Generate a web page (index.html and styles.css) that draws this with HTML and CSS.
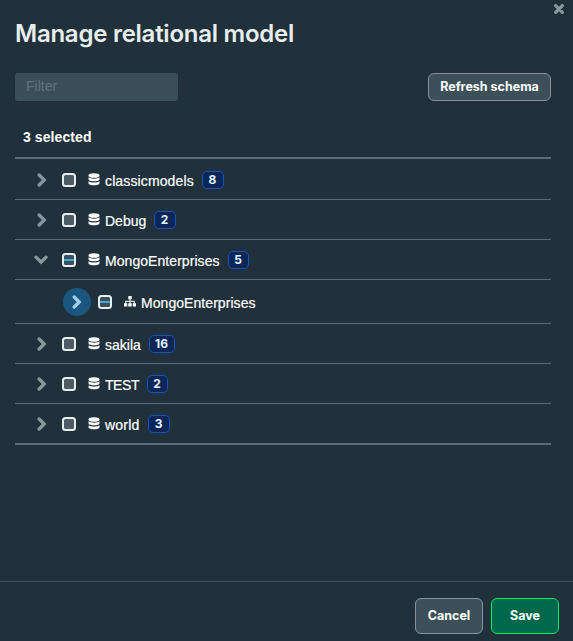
FILE: index.html
```
<!DOCTYPE html>
<html lang="en">
<head>
<meta charset="utf-8">
<title>Manage relational model</title>
<link rel="stylesheet" href="styles.css">
</head>
<body>
<svg class="defs" width="0" height="0" aria-hidden="true">
  <symbol id="right" viewBox="0 0 10 14"><path d="M2.200 2l5 5-5 5" fill="none" stroke="currentColor" stroke-width="3.300" stroke-linecap="round" stroke-linejoin="miter"/></symbol>
  <symbol id="down" viewBox="0 0 14 10"><path d="M2 2.200l5 5 5-5" fill="none" stroke="currentColor" stroke-width="3.300" stroke-linecap="round" stroke-linejoin="miter"/></symbol>
  <symbol id="db" viewBox="0 0 12 13"><ellipse cx="6" cy="2.500" rx="5.500" ry="2.300" fill="currentColor"/><path d="M.5 4.300c2 1.800 9 1.800 11 0v1.900c0 2.700-11 2.700-11 0zM.5 8.200c2 1.800 9 1.800 11 0v2c0 2.800-11 2.800-11 0z" fill="currentColor"/></symbol>
  <symbol id="tree" viewBox="0 0 12 11"><path d="M4.300 0h3.400v3.200H6.500v1.600h4.200v2.500H12v3.200H8.700V7.300h1V5.700H6.500v1.600h1.200v3.200H4.300V7.300h1.200V5.700H2.300v1.600h1v3.200H0V7.300h1.300V4.800h4.200V3.200H4.300z" fill="currentColor"/></symbol>
</svg>
<main class="dialog">
  <svg class="close" viewBox="0 0 10 10"><path d="M1.700 1.700l6.600 6.600M8.300 1.700l-6.600 6.600" fill="none" stroke="currentColor" stroke-width="3.300" stroke-linecap="round"/></svg>
  <section class="content">
    <h1>Manage relational model</h1>
    <div class="toolbar">
      <input class="filter" type="text" placeholder="Filter" aria-label="Filter">
      <button class="btn refresh">Refresh schema</button>
    </div>
    <div class="summary">3 selected</div>
    <div class="tree">
      <div class="row first"><svg class="chev"><use href="#right"/></svg><i class="check"></i><svg class="db"><use href="#db"/></svg><span class="name n1">classicmodels</span><b class="badge">8</b></div>
      <div class="row"><svg class="chev"><use href="#right"/></svg><i class="check"></i><svg class="db"><use href="#db"/></svg><span class="name n2">Debug</span><b class="badge">2</b></div>
      <div class="row"><svg class="chev open"><use href="#down"/></svg><i class="check partial"></i><svg class="db"><use href="#db"/></svg><span class="name n3">MongoEnterprises</span><b class="badge narrow">5</b></div>
      <div class="row child"><span class="focus"><svg><use href="#right"/></svg></span><i class="check partial"></i><svg class="schema"><use href="#tree"/></svg><span class="name n3">MongoEnterprises</span></div>
      <div class="row"><svg class="chev"><use href="#right"/></svg><i class="check"></i><svg class="db"><use href="#db"/></svg><span class="name n4">sakila</span><b class="badge wide">16</b></div>
      <div class="row"><svg class="chev"><use href="#right"/></svg><i class="check"></i><svg class="db"><use href="#db"/></svg><span class="name n5">TEST</span><b class="badge narrow">2</b></div>
      <div class="row last"><svg class="chev"><use href="#right"/></svg><i class="check"></i><svg class="db"><use href="#db"/></svg><span class="name n6">world</span><b class="badge">3</b></div>
    </div>
  </section>
  <footer><button class="btn">Cancel</button><button class="btn save">Save</button></footer>
</main>
</body>
</html>
```
FILE: styles.css
```
* { box-sizing: border-box; }
body { margin: 0; background: #21313c; color: #fff; font-family: "Liberation Sans", Arial, sans-serif; }
.defs { position: absolute; }
.dialog { position: relative; display: flex; flex-direction: column; height: 641px; overflow: hidden; }
.close { position: absolute; top: 4px; right: 9px; width: 10px; height: 10px; color: #89979b; }
.content { flex: 1; padding: 18px 22px 0 15px; }
h1 { margin: 0; height: 32px; font: 600 24px/32px Inter, sans-serif; letter-spacing: -.25px; color: #e7eeec; white-space: nowrap; }
.toolbar { display: flex; justify-content: space-between; margin-top: 23px; height: 28px; }
.filter { width: 163px; height: 28px; border: 0; border-radius: 3px; padding: 0 11px 2px; background: #3a4e58; color: #fff; font: 14px "Liberation Sans", Arial, sans-serif; }
.filter::placeholder { color: #61727a; opacity: 1; }
.btn { display: flex; align-items: center; justify-content: center; width: 68px; height: 36px; padding: 0; border: 1px solid #889397; border-radius: 6px; background: #3d4f58; color: #fff; font: 700 12.5px/20px Inter, sans-serif; white-space: nowrap; }
.refresh { width: 123px; height: 28px; }
.summary { height: 58px; padding: 26px 8px 0; border-bottom: 2px solid #5c6c75; font-weight: 700; font-size: 14px; line-height: 20px; letter-spacing: .08px; }
.row { display: flex; align-items: center; height: 40px; border-bottom: 1px solid #5c6c75; padding-left: 21px; }
.row.first { height: 41px; padding-top: 1px; }
.row.last { height: 41px; border-bottom-width: 2px; }
.row.child { height: 44px; padding-left: 48px; }
svg { display: block; flex: none; }
.chev { width: 10px; height: 14px; margin: 0 15px 0 1px; color: #89979b; }
.chev.open { width: 14px; height: 10px; margin: 1px 14px 0 -2px; }
.check { flex: none; width: 14px; height: 14px; border: 2px solid #e7eeec; border-radius: 3.5px; background: #4d5b65; }
.check.partial { background: linear-gradient(#3d4f58 4px, #41a9e1 4px, #41a9e1 6px, #3d4f58 6px) padding-box; }
.db { width: 12px; height: 13px; margin: 0 5px 0 12px; }
.schema { width: 12px; height: 11px; margin: 0 5px 0 12px; }
.name { font-size: 14px; line-height: 20px; padding-top: 2px; white-space: nowrap; -webkit-text-stroke: .2px currentColor; }
.n1 { width: 89px; letter-spacing: .13px; }
.n2 { width: 41px; }
.n3 { width: 115px; letter-spacing: .06px; }
.n4 { width: 36px; }
.n5 { width: 34px; letter-spacing: -.45px; }
.n6 { width: 35px; letter-spacing: .2px; }
.badge { display: flex; align-items: center; justify-content: center; width: 22px; height: 18px; margin-left: 8px; padding-right: 1px; border: 1px solid #1254b7; border-radius: 5px; background: #0c2657; color: #e1f7ff; font: 700 12px/16px Inter, sans-serif; }
.badge.narrow { width: 21px; }
.badge.wide { width: 26px; }
.focus { display: flex; align-items: center; justify-content: center; width: 28px; height: 28px; border-radius: 50%; background: #1a567e; color: #9dd0e7; margin-right: 7px; }
.focus svg { width: 10px; height: 14px; }
footer { display: flex; justify-content: flex-end; gap: 8px; height: 60px; padding: 16px 14px 0; border-top: 1px solid #3d4f58; }
.save { background: #00684a; border-color: #00ed64; }
```
